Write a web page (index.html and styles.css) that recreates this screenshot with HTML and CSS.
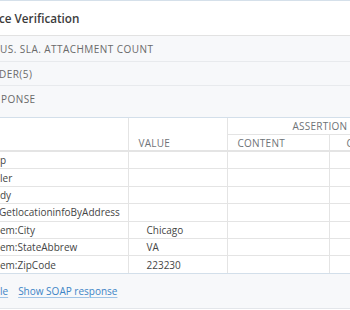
FILE: index.html
```html
<!DOCTYPE html>
<html>
<head>
<meta charset="utf-8">
<link rel="stylesheet" href="styles.css">
</head>
<body>
<div class="panel">
  <div class="panel-head"><span class="cut1">ce Verification</span></div>
  <div class="section s1"><span>US. SLA. ATTACHMENT COUNT</span></div>
  <div class="section s2"><span class="cut2">DER(5)</span></div>
  <div class="section s3"><span>PONSE</span></div>
  <table class="grid">
    <colgroup>
      <col class="c-name"><col class="c-value"><col class="c-content"><col class="c-more">
    </colgroup>
    <thead>
      <tr class="h1">
        <th rowspan="2"></th>
        <th rowspan="2" class="th-value">VALUE</th>
        <th colspan="2" class="th-group"><span class="group-label">ASSERTION</span></th>
      </tr>
      <tr class="h2">
        <th class="th-sub">CONTENT</th>
        <th class="th-sub th-last">C</th>
      </tr>
    </thead>
    <tbody>
      <tr><td class="name">p</td><td class="val"></td><td></td><td></td></tr>
      <tr><td class="name">ler</td><td class="val"></td><td></td><td></td></tr>
      <tr><td class="name">dy</td><td class="val"></td><td></td><td></td></tr>
      <tr><td class="name cutg">GetlocationinfoByAddress</td><td class="val"></td><td></td><td></td></tr>
      <tr><td class="name">em:City</td><td class="val">Chicago</td><td></td><td></td></tr>
      <tr><td class="name">em:StateAbbrew</td><td class="val">VA</td><td></td><td></td></tr>
      <tr><td class="name">em:ZipCode</td><td class="val">223230</td><td></td><td></td></tr>
    </tbody>
  </table>
  <div class="foot">
    <a class="link" href="#">le</a>
    <a class="link" href="#">Show SOAP response</a>
  </div>
</div>
</body>
</html>
```

FILE: styles.css
```css
html, body {
  margin: 0;
  padding: 0;
  background: #ffffff;
}
body {
  width: 350px;
  height: 310px;
  overflow: hidden;
  font-family: "Open Sans", "Noto Sans", sans-serif;
}
.panel {
  width: 460px;
  border-top: 1px solid #d5e0ea;
  border-bottom: 1px solid #e3e6ea;
}
.panel-head {
  height: 34px;
  display: flex;
  align-items: center;
  font-size: 11.7px;
  font-weight: 600;
  color: #3b3b3b;
  border-bottom: 1px solid #e2e2e2;
}
.cut1 { margin-left: -1px; }
.section {
  display: flex;
  align-items: center;
  background: #f7f8fa;
  font-size: 10px;
  letter-spacing: 0.45px;
  color: #6a6a6a;
  border-bottom: 1px solid #e8eaed;
}
.s1 { height: 25px; }
.s2 { height: 23px; }
.s3 { height: 32px; align-items: flex-start; padding-top: 6px; box-sizing: border-box; border-bottom: 1px solid #d3dfea; }
.s3 span { margin-left: 1px; }
.cut2 { margin-left: -1px; }
.grid {
  border-collapse: collapse;
  table-layout: fixed;
  width: 460px;
  font-size: 10px;
  color: #454545;
}
.c-name { width: 128px; }
.c-value { width: 99px; }
.c-content { width: 102px; }
.c-more { width: 131px; }
.grid th, .grid td {
  border-right: 1px solid #e4e4e4;
  border-bottom: 1px solid #e4e4e4;
  padding: 0;
  text-align: left;
  font-weight: 400;
  white-space: nowrap;
  overflow: hidden;
}
.grid thead th {
  font-size: 10px;
  color: #6e7378;
  letter-spacing: 0.25px;
}
.h1 th { height: 16px; }
.h2 th { height: 15px; border-bottom: 2px solid #e4e4e4; }
.grid thead th[rowspan] { border-bottom: 2px solid #e4e4e4; vertical-align: bottom; }
.th-value { padding-left: 10px !important; padding-bottom: 0 !important; }
.th-group { padding-left: 65px !important; }
.th-sub { padding-left: 10px !important; vertical-align: middle; }
.th-last { padding-left: 17px !important; }
.grid tbody td { height: 16.4px; line-height: 16px; }
.grid tbody tr:last-child td { border-bottom: 1px solid #d3dfea; }
.name { padding-left: 0; }
.cutg { text-indent: -1px; }
.val { padding-left: 18px !important; }
.foot {
  height: 34px;
  display: flex;
  align-items: center;
  gap: 10px;
  background: #f7f8fa;
  font-size: 10px;
}
.link {
  color: #3d84c6;
  text-decoration: underline;
  text-decoration-color: #9fc3e6;
  text-underline-offset: 2px;
}
```
